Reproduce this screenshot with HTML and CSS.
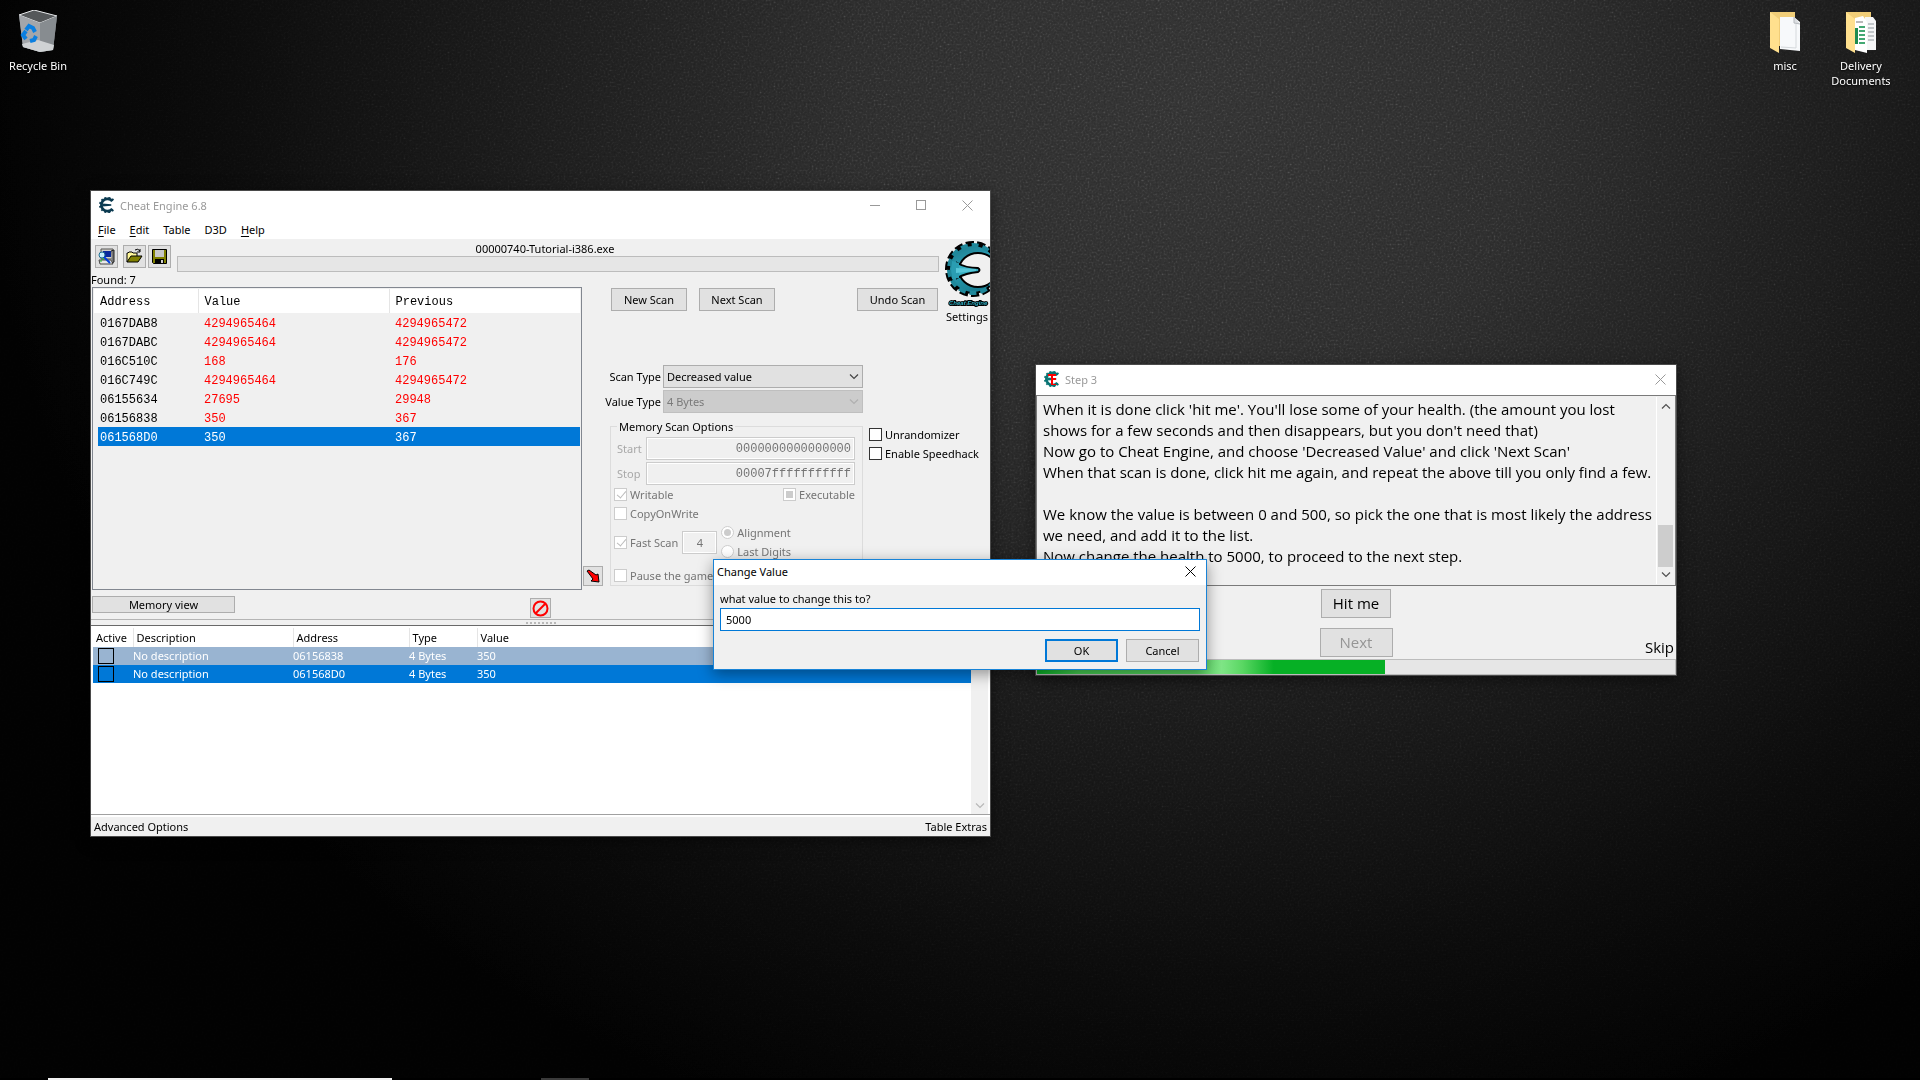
FILE: index.html
```html
<!DOCTYPE html>
<html lang="en">
<head>
    <meta charset="UTF-8">
    <meta name="viewport" content="width=device-width, initial-scale=1.0">
    <title>Cheat Engine 6.8</title>
    <link rel="stylesheet" href="styles.css">
</head>
<body>

    <!-- shared shapes -->
    <svg class="defs" aria-hidden="true">
        <symbol id="gear" viewBox="0 0 60 60">
            <path d="M54 12 A29 27 0 1 0 54 48" fill="none" stroke="currentColor" stroke-width="7" stroke-dasharray="7 7"/>
            <path d="M50 16 A23 23 0 1 0 50 44" fill="none" stroke="currentColor" stroke-width="10"/>
            <path d="M12 24 L46 27 L46 33 L12 36 Z" fill="currentColor"/>
        </symbol>
        <symbol id="close" viewBox="0 0 11 11">
            <path d="M0.5 0.5 L10.5 10.5 M10.5 0.5 L0.5 10.5" fill="none" stroke="currentColor"/>
        </symbol>
        <symbol id="down" viewBox="0 0 10 6">
            <path d="M1 0.5 L5 4.5 L9 0.5" fill="none" stroke="currentColor" stroke-width="1.2"/>
        </symbol>
    </svg>

    <svg class="grain" aria-hidden="true">
        <filter id="noise" x="0" y="0" width="100%" height="100%" color-interpolation-filters="sRGB">
            <feTurbulence type="fractalNoise" baseFrequency="0.5" numOctaves="3"/>
            <feColorMatrix type="matrix" values="1 0 0 0 0  1 0 0 0 0  1 0 0 0 0  0 0 0 0 1"/>
        </filter>
        <rect width="100%" height="100%" filter="url(#noise)"/>
    </svg>

    <!-- desktop icons -->
    <div class="desktop-icons left">
        <a href="#" class="desktop-icon">
            <svg width="40" height="44" viewBox="0 0 40 44">
                <path d="M1 5 L16 0 L39 6 L35 40 L22 42 L5 37 Z" fill="#8b8f92"/>
                <path d="M1 5 L16 0 L39 6 L22 13 Z" fill="#55585a" stroke="#e4e6e8"/>
                <path d="M1 5 L22 13 L22 42 L5 37 Z" fill="#a3a6aa"/>
                <path d="M22 13 L39 6 L35 40 L22 42 Z" fill="#878c90"/>
                <path d="M4 34 L20 30 L36 35 L35 40 L22 42 L5 37 Z" fill="#cfd2d4"/>
                <path d="M8 20 L11 16 L15 18 L17 22 M18 26 L16 30 L12 31 M8 29 L5 25 L8 21" fill="none" stroke="#0a7fe0" stroke-width="4"/>
            </svg>
            <span>Recycle Bin</span>
        </a>
    </div>
    <div class="desktop-icons right">
        <a href="#" class="desktop-icon">
            <svg width="32" height="44" viewBox="0 0 32 44">
                <path d="M1 2 L26 2 L26 36 L10 36 L1 38 Z" fill="#f0cd78"/>
                <path d="M11 7 L25 7 L31 12 L31 41 L11 39 Z" fill="#f7f9fb"/>
                <path d="M25 7 L25 13 L31 14" fill="#dcdfe2" stroke="#b5b9bd"/>
                <path d="M12 37 L27 38 L27 14" fill="none" stroke="#d5d9dc"/>
                <path d="M1 2 L10 9 L10 43 L1 38 Z" fill="#ffe08e"/>
            </svg>
            <span>misc</span>
        </a>
        <a href="#" class="desktop-icon">
            <svg width="32" height="44" viewBox="0 0 32 44">
                <path d="M1 2 L26 2 L26 36 L10 36 L1 38 Z" fill="#f0cd78"/>
                <path d="M20 7 L28 7 L31 11 L31 40 L20 40 Z" fill="#f5f6f7"/>
                <path d="M23 14h6M23 18h6M23 22h6M23 26h6M23 30h6" stroke="#8f979c"/>
                <path d="M10 8 L18 6 L22 12 L22 43 L10 40 Z" fill="#fff"/>
                <path d="M10 18 h3 v16 h-3 Z" fill="#1d8b50"/>
                <path d="M11 12h7" stroke="#777"/>
                <path d="M14 17h6M14 21h6M14 25h6M14 29h6M14 33h6" stroke="#43a873" stroke-width="2"/>
                <path d="M1 2 L10 9 L10 43 L1 38 Z" fill="#ffe08e"/>
            </svg>
            <span>Delivery Documents</span>
        </a>
    </div>

    <!-- main window -->
    <main class="window main-window">
        <div class="titlebar">
            <svg class="app-icon navy" width="16" height="16"><use href="#gear"/></svg>
            <h1>Cheat Engine 6.8</h1>
            <button class="caption" aria-label="Minimize"><svg width="11" height="11"><path d="M0 5.5H10" stroke="currentColor"/></svg></button>
            <button class="caption" aria-label="Maximize"><svg width="11" height="11"><rect x="0.5" y="0.5" width="9" height="9" fill="none" stroke="currentColor"/></svg></button>
            <button class="caption" aria-label="Close"><svg width="11" height="11"><use href="#close"/></svg></button>
        </div>
        <nav class="menu">
            <a href="#"><u>F</u>ile</a>
            <a href="#"><u>E</u>dit</a>
            <a href="#">Table</a>
            <a href="#">D3D</a>
            <a href="#"><u>H</u>elp</a>
        </nav>

        <div class="client">
            <div class="toolbar">
                <button class="tool process" aria-label="Open process">
                    <svg width="17" height="17" viewBox="0 0 17 17">
                        <path d="M3 1H15V11H3Z" fill="#d4d0c8" stroke="#555"/>
                        <rect x="5" y="3" width="8" height="6" fill="#0a2a9c"/>
                        <path d="M1 12H13L15 16H2Z" fill="#e8e8e8" stroke="#444"/>
                        <path d="M13 3L16 2V14L14 15" fill="#777" stroke="#222"/>
                        <circle cx="4" cy="7" r="3" fill="#c8f0ff" stroke="#1c6c90"/>
                        <path d="M6 9L12 15" stroke="#0040e0" stroke-width="2"/>
                        <path d="M2 13h2M4 11h2" stroke="#12c020"/>
                    </svg>
                </button>
                <button class="tool" aria-label="Open file">
                    <svg width="17" height="17" viewBox="0 0 17 17">
                        <path d="M1 14V5H2L3 4H6L7 5H11V8" fill="#fff799" stroke="#000"/>
                        <path d="M1 14L5 8H16L12 14Z" fill="#808000" stroke="#000"/>
                        <path d="M9 2Q12 0 14 3M14 1V4H11" fill="none" stroke="#000"/>
                    </svg>
                </button>
                <button class="tool" aria-label="Save file">
                    <svg width="17" height="17" viewBox="0 0 17 17">
                        <path d="M1.5 1.5H15.5V15.5H2.5L1.5 14.5Z" fill="#808000" stroke="#000"/>
                        <rect x="4" y="2" width="9" height="7" fill="#c8c8c8"/>
                        <rect x="4" y="11" width="9" height="5" fill="#000"/>
                        <rect x="10" y="12" width="2" height="3" fill="#d0d0d0"/>
                    </svg>
                </button>
                <div class="process-info">
                    <label for="scanProgress">00000740-Tutorial-i386.exe</label>
                    <progress id="scanProgress" value="0" max="100"></progress>
                </div>
            </div>

            <a href="#" class="settings">
                <svg width="46" height="68" viewBox="0 0 46 68">
                    <defs>
                        <linearGradient id="teal" x1="0" y1="0" x2="0.4" y2="1">
                            <stop offset="0" stop-color="#1b7688"/>
                            <stop offset="0.5" stop-color="#2a9db2"/>
                            <stop offset="1" stop-color="#187e92"/>
                        </linearGradient>
                    </defs>
                    <circle cx="29" cy="28" r="25" fill="none" stroke="#000" stroke-width="6" stroke-dasharray="8 3"/>
                    <path d="M5 28 A24 24 0 1 0 53 28 A24 24 0 1 0 5 28 Z M15 29 A19 17 0 1 1 53 29 A19 17 0 1 1 15 29 Z" fill="url(#teal)" fill-rule="evenodd" stroke="#000" stroke-width="2"/>
                    <circle cx="29" cy="28" r="24" fill="none" stroke="#1f889b" stroke-width="4" stroke-dasharray="7 4" stroke-dashoffset="-1"/>
                    <path d="M13 22 Q22 27 34 27 Q37 29 34 31 Q22 32 13 37 Z" fill="#35aec2" stroke="#000" stroke-width="2"/>
                    <path d="M8 20 L15 22 L15 37 L8 38 Z" fill="#2a9db2"/>
                    <path d="M12 27 L32 28 L32 30 L12 32 Z" fill="#55c6d8"/>
                    <text x="5" y="64" class="logo-text">Cheat Engine</text>
                </svg>
                <span>Settings</span>
            </a>

            <div class="found">Found: 7</div>

            <div class="results">
                <div class="found-list">
                    <table>
                        <thead>
                            <tr><th class="col-address">Address</th><th class="col-value">Value</th><th>Previous</th></tr>
                        </thead>
                        <tbody>
                            <tr><td>0167DAB8</td><td>4294965464</td><td>4294965472</td></tr>
                            <tr><td>0167DABC</td><td>4294965464</td><td>4294965472</td></tr>
                            <tr><td>016C510C</td><td>168</td><td>176</td></tr>
                            <tr><td>016C749C</td><td>4294965464</td><td>4294965472</td></tr>
                            <tr><td>06155634</td><td>27695</td><td>29948</td></tr>
                            <tr><td>06156838</td><td>350</td><td>367</td></tr>
                            <tr class="selected"><td>061568D0</td><td>350</td><td>367</td></tr>
                        </tbody>
                    </table>
                </div>
                <div class="results-footer">
                    <button class="memory-view">Memory view</button>
                    <button class="clear" aria-label="Clear list">
                        <svg width="17" height="17" viewBox="0 0 17 17"><circle cx="8.5" cy="8.5" r="7" fill="none" stroke="#f00" stroke-width="2"/><path d="M4 13L13 4" stroke="#f00" stroke-width="2"/></svg>
                    </button>
                </div>
            </div>

            <div class="scan-panel">
                <div class="scan-buttons">
                    <button>New Scan</button>
                    <button>Next Scan</button>
                    <button class="undo">Undo Scan</button>
                </div>

                <div class="scan-types">
                    <label for="scanType">Scan Type</label>
                    <div class="select-box">
                        <select id="scanType"><option>Decreased value</option></select>
                        <svg width="10" height="6"><use href="#down"/></svg>
                    </div>
                    <label for="valueType">Value Type</label>
                    <div class="select-box disabled">
                        <select id="valueType" disabled><option>4 Bytes</option></select>
                        <svg width="10" height="6"><use href="#down"/></svg>
                    </div>
                </div>

                <div class="scan-options">
                    <button class="add-selected" aria-label="Add selected addresses">
                        <svg width="15" height="15" viewBox="0 0 15 15"><path d="M1 2L3 1L10 6L12 5L13 13L5 12L7 10Z" fill="#f00" stroke="#000"/></svg>
                    </button>
                    <fieldset>
                        <legend>Memory Scan Options</legend>
                        <div class="range">
                            <label for="start">Start</label>
                            <input type="text" id="start" value="0000000000000000" disabled>
                            <label for="stop">Stop</label>
                            <input type="text" id="stop" value="00007fffffffffff" disabled>
                        </div>
                        <div class="option-row">
                            <label class="check"><input type="checkbox" checked disabled>Writable</label>
                            <label class="check executable"><input type="checkbox" class="mixed" disabled>Executable</label>
                        </div>
                        <div class="option-row">
                            <label class="check"><input type="checkbox" disabled>CopyOnWrite</label>
                        </div>
                        <div class="fast-scan">
                            <label class="check"><input type="checkbox" checked disabled>Fast Scan</label>
                            <input type="text" class="alignment" value="4" aria-label="Alignment size" disabled>
                            <div class="radios">
                                <label class="check"><input type="radio" name="align" checked disabled>Alignment</label>
                                <label class="check"><input type="radio" name="align" disabled>Last Digits</label>
                            </div>
                        </div>
                        <div class="option-row pause">
                            <label class="check"><input type="checkbox" disabled>Pause the game</label>
                        </div>
                    </fieldset>
                    <div class="extras">
                        <label class="check"><input type="checkbox">Unrandomizer</label>
                        <label class="check"><input type="checkbox">Enable Speedhack</label>
                    </div>
                </div>
            </div>
        </div>

        <div class="splitter"><span></span></div>

        <div class="cheat-list">
            <table>
                <thead>
                    <tr><th class="c-active">Active</th><th class="c-desc">Description</th><th class="c-addr">Address</th><th class="c-type">Type</th><th>Value</th></tr>
                </thead>
                <tbody>
                    <tr class="inactive"><td><input type="checkbox" aria-label="Activate 06156838"></td><td>No description</td><td>06156838</td><td>4 Bytes</td><td>350</td></tr>
                    <tr class="selected"><td><input type="checkbox" aria-label="Activate 061568D0"></td><td>No description</td><td>061568D0</td><td>4 Bytes</td><td>350</td></tr>
                </tbody>
            </table>
            <div class="scrollbar"><svg width="10" height="6"><use href="#down"/></svg></div>
        </div>

        <div class="statusbar">
            <a href="#">Advanced Options</a>
            <a href="#">Table Extras</a>
        </div>
    </main>

    <!-- tutorial window -->
    <section class="window tutorial">
        <div class="titlebar">
            <svg class="app-icon green" width="16" height="16" viewBox="0 0 16 16">
                <use href="#gear" width="16" height="16"/>
                <path d="M4 3H12V5H9V7H12V9H9V13H12V14H7V5H4Z" fill="#f00"/>
            </svg>
            <h2>Step 3</h2>
            <button class="caption" aria-label="Close"><svg width="11" height="11"><use href="#close"/></svg></button>
        </div>
        <div class="memo">
            <textarea rows="8" readonly aria-label="Instructions">When it is done click 'hit me'. You'll lose some of your health. (the amount you lost
shows for a few seconds and then disappears, but you don't need that)
Now go to Cheat Engine, and choose 'Decreased Value' and click 'Next Scan'
When that scan is done, click hit me again, and repeat the above till you only find a few.

We know the value is between 0 and 500, so pick the one that is most likely the address
we need, and add it to the list.
Now change the health to 5000, to proceed to the next step.</textarea>
            <div class="scrollbar">
                <svg class="up" width="10" height="6"><use href="#down"/></svg>
                <span class="thumb"></span>
                <svg width="10" height="6"><use href="#down"/></svg>
            </div>
        </div>
        <div class="tutorial-actions">
            <button class="hit">Hit me</button>
            <button class="next" disabled>Next</button>
            <a href="#" class="skip">Skip</a>
        </div>
        <progress class="health" value="545" max="1000" aria-label="Progress"></progress>
    </section>

    <!-- change value dialog -->
    <form class="window dialog" onsubmit="return false">
        <div class="titlebar">
            <h2>Change Value</h2>
            <button type="button" class="caption" aria-label="Close"><svg width="11" height="11"><use href="#close"/></svg></button>
        </div>
        <div class="dialog-body">
            <label for="newValue">what value to change this to?</label>
            <input type="text" id="newValue" value="5000">
            <div class="dialog-buttons">
                <button class="default">OK</button>
                <button type="button">Cancel</button>
            </div>
        </div>
    </form>

    <footer class="taskbar">
        <span class="search"></span>
        <span class="running"></span>
    </footer>

</body>
</html>
```
FILE: styles.css
```css
* {
    margin: 0;
    padding: 0;
    box-sizing: border-box;
}

body {
    position: relative;
    height: 100vh;
    overflow: hidden;
    background: radial-gradient(ellipse 58% 92% at 62% 10%, #2e2e2e 0%, #292929 30%, #191919 60%, #0a0a0a 88%, #020202 108%);
    color: black;
    font-family: "Noto Sans", sans-serif;
    font-size: 11px;
    line-height: 15px;
}

button, input, select, textarea {
    font: inherit;
    color: inherit;
    appearance: none;
    border-radius: 0;
    outline: none;
}

a {
    color: inherit;
    text-decoration: none;
}

h1, h2 {
    font-size: 11px;
    font-weight: normal;
}

svg {
    display: block;
    flex: none;
}

table {
    border-collapse: collapse;
    table-layout: fixed;
    width: 100%;
}

th, td {
    text-align: left;
    font-weight: normal;
    white-space: nowrap;
}

.defs {
    position: absolute;
    width: 0;
    height: 0;
}

.grain {
    position: absolute;
    inset: 0;
    width: 100%;
    height: 100%;
    opacity: 0.18;
    mix-blend-mode: color-dodge;
}

/* desktop */
.desktop-icons {
    position: absolute;
    top: 10px;
    display: flex;
}

.desktop-icons.left {
    left: 0;
}

.desktop-icons.right {
    right: 21px;
}

.desktop-icon {
    display: flex;
    flex-direction: column;
    align-items: center;
    gap: 4px;
    width: 76px;
    color: white;
    text-align: center;
    text-shadow: 0 1px 2px black;
}

/* windows */
.window {
    position: absolute;
    display: flex;
    flex-direction: column;
    background: #f0f0f0;
    box-shadow: 0 0 0 1px #4a4a4a, 0 4px 14px rgba(0, 0, 0, 0.5);
}

.titlebar {
    display: flex;
    align-items: center;
    height: 30px;
    padding: 0 0 2px 8px;
    background: white;
    color: #999;
}

.titlebar h1, .titlebar h2 {
    flex: 1;
}

.app-icon {
    margin-right: 5px;
}

.navy {
    color: #0b3a50;
}

.green {
    color: #0a7474;
}

.caption {
    display: flex;
    align-items: center;
    justify-content: center;
    width: 46px;
    height: 100%;
    border: none;
    background: none;
}

.window button:not(.caption) {
    display: flex;
    align-items: center;
    justify-content: center;
    border: 1px solid #adadad;
    background: #e1e1e1;
}

.menu {
    display: flex;
    gap: 14px;
    height: 18px;
    padding-left: 7px;
    background: white;
    line-height: 18px;
}

.menu u {
    text-underline-offset: 2px;
}

/* main window */
.main-window {
    left: 91px;
    top: 191px;
    width: 899px;
}

.client {
    display: grid;
    grid-template-columns: 491px 1fr 46px;
    grid-template-rows: 34px 14px auto;
}

.toolbar {
    grid-area: 1 / 1 / 2 / 3;
    display: flex;
    gap: 2px;
    padding: 0 5px 0 4px;
}

.window .tool {
    width: 23px;
    height: 23px;
    margin-top: 6px;
}

.window .process {
    margin-right: 3px;
}

.process-info {
    flex: 1;
    display: flex;
    flex-direction: column;
    margin-left: 4px;
}

.process-info label {
    height: 17px;
    line-height: 19px;
    padding-right: 26px;
    text-align: center;
}

progress {
    display: block;
    width: 100%;
    height: 16px;
    appearance: none;
    border: 1px solid #bcbcbc;
    background: #e6e6e6;
}

progress::-webkit-progress-bar {
    background: #e6e6e6;
}

.settings {
    grid-area: 1 / 3 / 4 / 4;
    align-self: start;
    padding-top: 2px;
    text-align: center;
}

.logo-text {
    font: italic bold 6px "Liberation Sans", sans-serif;
    fill: #2fb0c4;
    stroke: black;
    stroke-width: 2px;
    paint-order: stroke;
}

.found {
    grid-area: 2 / 1 / 3 / 2;
    line-height: 14px;
}

.results {
    grid-area: 3 / 1 / 4 / 2;
    padding-left: 1px;
}

.found-list {
    height: 303px;
    border: 1px solid #828790;
    padding: 1px;
    font-family: "Liberation Mono", monospace;
    font-size: 12px;
}

.found-list th {
    height: 24px;
    padding: 2px 0 0 6px;
    background: white;
    border-right: 1px solid #e5e5e5;
}

.found-list td {
    height: 19px;
    padding: 3px 0 0 6px;
    color: red;
}

.found-list td:first-child {
    color: black;
}

.col-address {
    width: 104px;
}

.col-value {
    width: 191px;
}

.found-list .selected td {
    background: #0078d7;
    color: white;
}

.found-list .selected td:first-child {
    background: linear-gradient(to right, #f0f0f0 4px, #0078d7 4px);
}

.results-footer {
    display: flex;
    align-items: flex-start;
    justify-content: space-between;
    height: 29px;
    padding: 6px 31px 0 0;
}

.window .memory-view {
    width: 143px;
    height: 17px;
}

.window .clear {
    width: 21px;
    height: 20px;
    margin-top: 2px;
}

.scan-panel {
    grid-area: 3 / 2 / 4 / 4;
    padding-top: 1px;
}

.scan-buttons {
    display: flex;
    gap: 12px;
    padding: 0 52px 0 29px;
}

.scan-buttons button {
    width: 76px;
    height: 23px;
}

.scan-buttons .undo {
    width: 81px;
    margin-left: auto;
}

.scan-types {
    display: grid;
    grid-template-columns: 79px 200px;
    gap: 2px;
    align-items: center;
    margin-top: 54px;
    text-align: right;
}

.select-box {
    position: relative;
    color: #444;
}

.select-box select {
    display: block;
    width: 100%;
    height: 23px;
    padding: 0 3px;
    border: 1px solid #adadad;
    background: #e1e1e1;
    color: black;
}

.select-box.disabled {
    color: #b0b0b0;
}

.select-box.disabled select {
    border-color: #bfbfbf;
    background: #ccc;
    color: #7a7a7a;
    opacity: 1;
}

.select-box svg {
    position: absolute;
    right: 4px;
    top: 9px;
}

.scan-options {
    display: flex;
    margin-top: 6px;
}

.window .add-selected {
    align-self: flex-end;
    width: 20px;
    height: 20px;
    margin: 0 7px 0 1px;
}

fieldset {
    width: 253px;
    height: 167px;
    padding: 0 7px 0 3px;
    border: 1px solid #dcdcdc;
    color: #757575;
}

legend {
    margin-left: 3px;
    padding: 0 2px;
    color: black;
}

.range {
    display: grid;
    grid-template-columns: 32px 1fr;
    row-gap: 2px;
    align-items: center;
    margin-top: 3px;
    color: #a8a8a8;
}

.range label {
    padding-left: 3px;
}

.range input, .alignment {
    width: 100%;
    height: 23px;
    border: 1px solid #ccc;
    background: #f0f0f0;
    color: #757575;
    box-shadow: inset 0 0 0 1px white;
}

.range input {
    padding-right: 3px;
    font-family: "Liberation Mono", monospace;
    font-size: 12px;
    text-align: right;
}

.option-row {
    display: flex;
    align-items: center;
    height: 19px;
}

.check {
    display: flex;
    align-items: center;
    gap: 3px;
    height: 19px;
    white-space: nowrap;
}

.check input {
    position: relative;
    flex: none;
    width: 13px;
    height: 13px;
    border: 1px solid #333;
    background: white;
}

.check input:disabled {
    border-color: #ccc;
}

.check input[type="checkbox"]:checked::after {
    content: "";
    position: absolute;
    left: 4px;
    top: 0;
    width: 4px;
    height: 8px;
    border: solid #bcbcbc;
    border-width: 0 1px 1px 0;
    transform: rotate(40deg);
}

.check .mixed::after, .check input[type="radio"]:checked::after {
    content: "";
    position: absolute;
    inset: 2px;
    background: #ccc;
}

.check input[type="radio"], .check input[type="radio"]:checked::after {
    border-radius: 50%;
}

.executable {
    margin-left: auto;
}

.fast-scan {
    display: flex;
    align-items: center;
    gap: 4px;
    height: 38px;
}

.window .alignment {
    width: 35px;
    text-align: center;
}

.pause {
    margin-top: 5px;
}

.extras {
    padding: 6px 0 0 6px;
}

.splitter {
    display: flex;
    justify-content: center;
    height: 7px;
    border-top: 1px solid #b4b4b4;
    border-bottom: 1px solid #696969;
}

.splitter span {
    width: 30px;
    height: 2px;
    margin-top: 2px;
    background: repeating-linear-gradient(to right, #b8b8b8 0 2px, transparent 2px 4px);
}

.cheat-list {
    display: flex;
    height: 189px;
    padding: 2px 2px 0 2px;
    border-bottom: 1px solid #a0a0a0;
    background: white;
}

.cheat-list table {
    flex: 1;
    align-self: flex-start;
}

.cheat-list th {
    height: 19px;
    padding-left: 3px;
    border-right: 1px solid #e5e5e5;
}

.cheat-list th:last-child, .found-list th:last-child {
    border-right: none;
}

.cheat-list td {
    height: 18px;
    padding-bottom: 2px;
    color: white;
}

.cheat-list td:first-child {
    padding-bottom: 0;
}

.cheat-list .inactive td {
    background: #99b4d1;
}

.cheat-list .selected td {
    background: #0078d7;
}

.cheat-list input {
    display: block;
    width: 16px;
    height: 16px;
    margin-left: 5px;
    border: 1px solid black;
}

.c-active {
    width: 40px;
}

.c-desc {
    width: 160px;
}

.c-addr {
    width: 116px;
}

.c-type {
    width: 68px;
}

.scrollbar {
    display: flex;
    flex-direction: column;
    align-items: center;
    justify-content: flex-end;
    width: 17px;
    padding-bottom: 5px;
    background: #f0f0f0;
    color: #b8b8b8;
}

.statusbar {
    display: flex;
    justify-content: space-between;
    height: 21px;
    padding: 0 3px;
    border-top: 2px solid white;
    line-height: 20px;
}

/* tutorial window */
.tutorial {
    left: 1036px;
    top: 365px;
    width: 640px;
}

.tutorial .caption {
    width: 32px;
}

.memo {
    display: flex;
    padding: 1px;
    border: 1px solid #7a7a7a;
    font-family: "Open Sans", sans-serif;
    font-size: 15px;
    line-height: 21px;
}

.memo textarea {
    flex: 1;
    padding: 2px 0 17px 5px;
    border: none;
    background: #f0f0f0;
    resize: none;
    overflow: hidden;
    white-space: pre;
}

.memo .scrollbar {
    width: 18px;
    padding: 6px 0;
    border-left: 1px solid white;
    color: #505050;
}

.up {
    transform: rotate(180deg);
}

.thumb {
    width: 15px;
    height: 42px;
    margin: auto 0 5px 0;
    background: #cdcdcd;
}

.tutorial-actions {
    display: grid;
    grid-template-columns: 1fr auto 1fr;
    justify-items: center;
    align-items: center;
    row-gap: 10px;
    padding: 3px 2px 2px 2px;
    font-family: "Open Sans", sans-serif;
    font-size: 15px;
}

.tutorial .hit {
    grid-column: 2;
    width: 70px;
    height: 29px;
}

.tutorial .next {
    grid-area: 2 / 2;
    width: 73px;
    height: 29px;
    border-color: #bfbfbf;
    background: #ccc;
    color: #959595;
}

.skip {
    grid-area: 2 / 3;
    justify-self: end;
    margin-top: 10px;
}

.health::-webkit-progress-value {
    background: linear-gradient(to right, #06b025 0%, #45cc52 12%, #5ad763 46%, #80e687 53%, #5ad763 59%, #06b025 68%);
}

/* dialog */
.dialog {
    left: 713px;
    top: 559px;
    width: 494px;
    border: 1px solid #1883d7;
    box-shadow: 0 4px 14px rgba(0, 0, 0, 0.4);
}

.dialog .titlebar {
    height: 25px;
    padding-left: 3px;
    color: black;
}

.dialog .caption {
    width: 32px;
    color: black;
}

.dialog-body {
    display: flex;
    flex-direction: column;
    gap: 2px;
    padding: 6px 6px 7px;
}

.dialog-body input {
    height: 23px;
    padding: 0 5px;
    border: 1px solid #0078d7;
    background: white;
}

.dialog-buttons {
    display: flex;
    justify-content: flex-end;
    gap: 8px;
    padding: 6px 1px 0 0;
}

.dialog-buttons button {
    width: 73px;
    height: 23px;
}

.window .dialog-buttons .default {
    border: 2px solid #0078d7;
}

/* taskbar edge */
.taskbar {
    position: absolute;
    left: 0;
    right: 0;
    bottom: 0;
    display: flex;
    gap: 149px;
    height: 2px;
    padding-left: 48px;
    background: black;
}

.search {
    width: 344px;
    background: #f2f2f2;
}

.running {
    width: 48px;
    background: #3a3a3a;
}
```
